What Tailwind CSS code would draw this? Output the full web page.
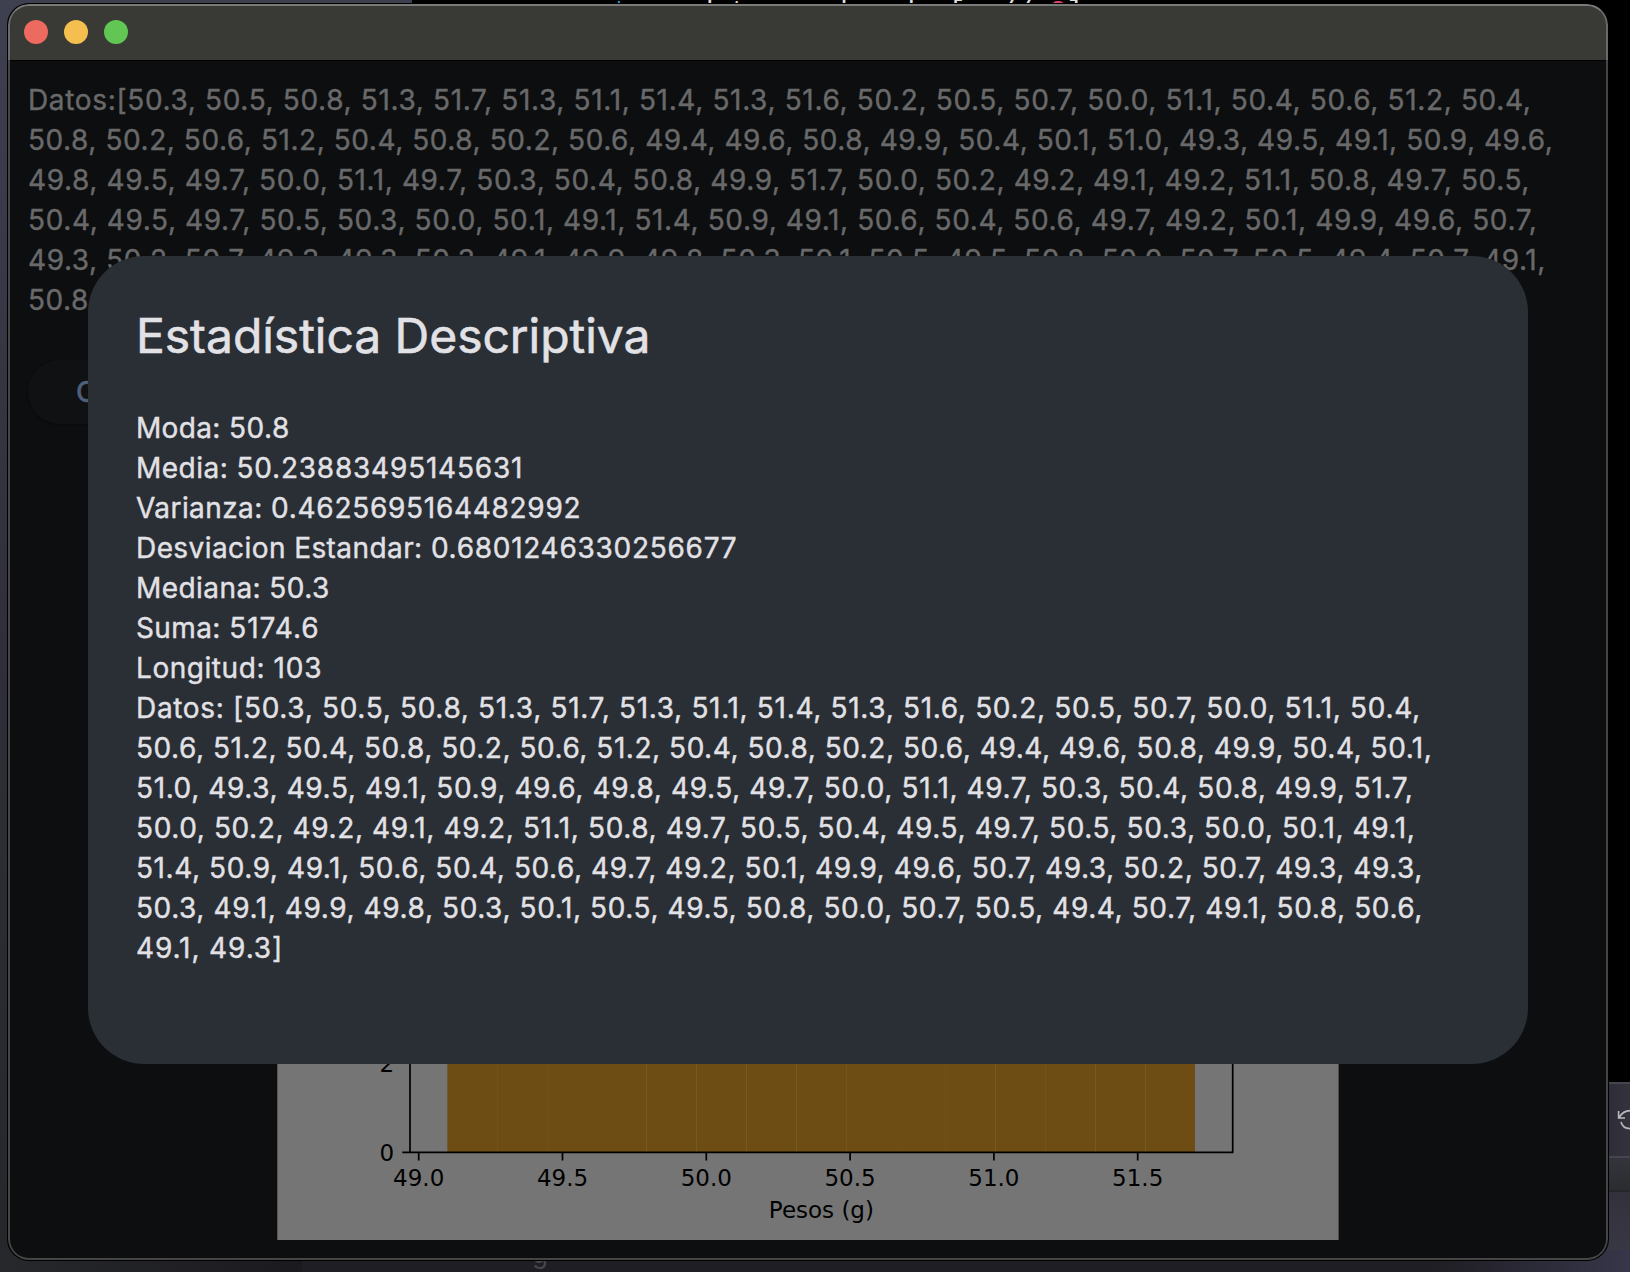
<!DOCTYPE html>
<html lang="es">
<head>
<meta charset="utf-8">
<title>Estadística Descriptiva</title>
<script src="https://cdn.jsdelivr.net/npm/@tailwindcss/browser@4"></script>
</head>
<body class="relative h-[1272px] w-[1630px] overflow-hidden bg-black font-['Inter','Liberation_Sans',sans-serif]">

  <!-- desktop behind the window -->
  <div class="absolute inset-0 flex flex-col">
    <div class="flex min-h-0 flex-1">
      <div class="h-full w-[412px] bg-linear-to-b from-[#3e4050] via-[#302f3a] to-[#26272b]"></div>
      <div class="relative flex flex-1 flex-col overflow-hidden">
        <pre class="absolute left-[167px] -top-[2px] font-['Liberation_Mono',monospace] text-[28px] leading-[28px] text-[#e0e0e0]"><span class="text-[#3b9ad6]">return</span> datos_ordenados[n // <span class="text-[#e0406f]">2</span>]</pre>
        <div class="h-[1082px]"></div>
        <div class="flex flex-1 justify-end">
          <div class="flex w-10 flex-col">
            <div class="flex h-[76px] items-center justify-end border-y-2 border-[#45454f] bg-linear-to-r from-[#292833] to-[#33323d]">
              <svg class="h-6 w-[13px]" viewBox="0 0 13 24" fill="none" stroke="#b9b9bd" stroke-width="1.6"><path d="M1.6 3v7H8M2 9.6C4.400 5.500 7.500 2.600 13 2.600M4 14c1 4 4 6.600 9 6.600"/></svg>
            </div>
            <div class="h-8 bg-linear-to-b from-[#34353c] to-[#2b2c30]"></div>
            <div class="h-0.5 bg-[#26262a]"></div>
            <div class="flex-1 bg-linear-to-b from-[#32313b] to-[#383744]"></div>
          </div>
        </div>
      </div>
    </div>
    <div class="flex h-[22px] overflow-hidden">
      <div class="w-[302px] bg-linear-to-r from-[#27282c] to-[#1b1b1f]"></div>
      <div class="flex flex-1 items-start bg-linear-to-r from-[#1e1e24] via-[#1f1e24] via-85% to-[#37364a] pl-[230px]">
        <span class="-mt-[10px] text-[26px] leading-[28px] text-[#46464a]">g</span>
      </div>
    </div>
  </div>

  <!-- application window -->
  <div class="relative ml-2 mt-1 flex h-[1256px] w-[1600px] flex-col overflow-hidden rounded-[21px] bg-[#0c0e10] shadow-[0_0_0_1px_#000]">
    <header class="flex h-14 shrink-0 items-center gap-4 rounded-t-[21px] border-2 border-b-0 border-[#696967] border-t-[#7a7b79] bg-[#393936] pb-0.5 pl-[14px]">
      <span class="size-6 rounded-full bg-[#ed6a5f]"></span>
      <span class="size-6 rounded-full bg-[#f5bf4f]"></span>
      <span class="size-6 rounded-full bg-[#62c655]"></span>
    </header>
    <main class="relative min-h-0 flex-1 rounded-b-[21px] border-2 border-t-0 border-[#444544] shadow-[inset_0_1px_0_#000]">
      <div class="whitespace-nowrap pl-[18px] pt-5 text-[28px] leading-10 text-[#69696a] [-webkit-text-stroke:0.4px]">
        <p class="tracking-[0.654px]">Datos:[50.3, 50.5, 50.8, 51.3, 51.7, 51.3, 51.1, 51.4, 51.3, 51.6, 50.2, 50.5, 50.7, 50.0, 51.1, 50.4, 50.6, 51.2, 50.4,</p>
        <p class="tracking-[0.561px]">50.8, 50.2, 50.6, 51.2, 50.4, 50.8, 50.2, 50.6, 49.4, 49.6, 50.8, 49.9, 50.4, 50.1, 51.0, 49.3, 49.5, 49.1, 50.9, 49.6,</p>
        <p class="tracking-[0.606px]">49.8, 49.5, 49.7, 50.0, 51.1, 49.7, 50.3, 50.4, 50.8, 49.9, 51.7, 50.0, 50.2, 49.2, 49.1, 49.2, 51.1, 50.8, 49.7, 50.5,</p>
        <p class="tracking-[0.612px]">50.4, 49.5, 49.7, 50.5, 50.3, 50.0, 50.1, 49.1, 51.4, 50.9, 49.1, 50.6, 50.4, 50.6, 49.7, 49.2, 50.1, 49.9, 49.6, 50.7,</p>
        <p class="tracking-[0.591px]">49.3, 50.2, 50.7, 49.3, 49.3, 50.3, 49.1, 49.9, 49.8, 50.3, 50.1, 50.5, 49.5, 50.8, 50.0, 50.7, 50.5, 49.4, 50.7, 49.1,</p>
        <p class="tracking-[0.5px]">50.8, 50.6, 49.1, 49.3]</p>
      </div>
      <button class="ml-[18px] mt-10 flex h-16 items-center rounded-full bg-[#101112] px-12 text-[28px] font-medium text-[#4d5f7c] shadow-[0_1px_2px_#090a0c] [-webkit-text-stroke:0.4px]">Calcular</button>

      <!-- histogram -->
      <svg class="absolute left-[267px] top-[900px] h-[280px] w-[1062px]" viewBox="277 960 1062 280" font-family="DejaVu Sans" font-size="23" fill="#000">
        <rect x="277.300" y="960" width="1061.300" height="280" fill="#757575"/>
        <rect x="447.300" y="960" width="747.700" height="192" fill="#6d4d14"/>
        <g fill="#755a28">
          <rect x="497" y="960" width="1" height="192" opacity=".5"/><rect x="547" y="960" width="1" height="192" opacity=".3"/>
          <rect x="646" y="960" width="1" height="192"/><rect x="696" y="960" width="1" height="192"/><rect x="746" y="960" width="1" height="192"/>
          <rect x="796" y="960" width="1" height="192"/><rect x="846" y="960" width="1" height="192" opacity=".6"/><rect x="896" y="960" width="1" height="192" opacity=".15"/>
          <rect x="945" y="960" width="1" height="192" opacity=".3"/><rect x="995" y="960" width="1" height="192"/><rect x="1045" y="960" width="1" height="192" opacity=".6"/>
          <rect x="1095" y="960" width="1" height="192"/><rect x="1145" y="960" width="1" height="192"/>
        </g>
        <g stroke="#000" stroke-width="1.700">
          <path d="M410 960V1153.200M1232.700 960V1153.200M402.300 1152.400H1233.500"/>
          <path d="M418.700 1152V1160.500M562.500 1152V1160.500M706.300 1152V1160.500M850.100 1152V1160.500M993.900 1152V1160.500M1137.700 1152V1160.500"/>
        </g>
        <g text-anchor="middle">
          <text x="418.700" y="1185.800">49.0</text><text x="562.500" y="1185.800">49.5</text><text x="706.300" y="1185.800">50.0</text>
          <text x="850.100" y="1185.800">50.5</text><text x="993.900" y="1185.800">51.0</text><text x="1137.700" y="1185.800">51.5</text>
          <text x="821.400" y="1217.600">Pesos (g)</text>
        </g>
        <g text-anchor="end"><text x="394.200" y="1161.200">0</text><text x="394.200" y="1071.500">2</text></g>
      </svg>

      <!-- dialog -->
      <section class="absolute left-[78px] top-[196px] h-[808px] w-[1440px] whitespace-nowrap rounded-[56px] bg-[#2a2e35] p-12 text-[28px] leading-10 text-[#e2e2e6] [-webkit-text-stroke:0.4px]">
        <h1 class="mb-10 text-[48px] leading-[64px] tracking-[-0.04px] [-webkit-text-stroke:0.6px]">Estadística Descriptiva</h1>
        <p class="tracking-[0.6px]"><span class="tracking-[0.33px]">Moda: </span>50.8</p>
        <p class="tracking-[0.78px]"><span class="tracking-[0.474px]">Media: </span>50.23883495145631</p>
        <p class="tracking-[0.71px]"><span class="tracking-[0.43px]">Varianza: </span>0.4625695164482992</p>
        <p class="tracking-[0.72px]"><span class="tracking-[0.42px]">Desviacion Estandar: </span>0.6801246330256677</p>
        <p class="tracking-[0.428px]">Mediana: 50.3</p>
        <p class="tracking-[1px]"><span class="tracking-[0.4px]">Suma: </span>5174.6</p>
        <p class="tracking-[0.9px]"><span class="tracking-[0.55px]">Longitud: </span>103</p>
        <p class="tracking-[0.682px]">Datos: [50.3, 50.5, 50.8, 51.3, 51.7, 51.3, 51.1, 51.4, 51.3, 51.6, 50.2, 50.5, 50.7, 50.0, 51.1, 50.4,</p>
        <p class="tracking-[0.535px]">50.6, 51.2, 50.4, 50.8, 50.2, 50.6, 51.2, 50.4, 50.8, 50.2, 50.6, 49.4, 49.6, 50.8, 49.9, 50.4, 50.1,</p>
        <p class="tracking-[0.61px]">51.0, 49.3, 49.5, 49.1, 50.9, 49.6, 49.8, 49.5, 49.7, 50.0, 51.1, 49.7, 50.3, 50.4, 50.8, 49.9, 51.7,</p>
        <p class="tracking-[0.61px]">50.0, 50.2, 49.2, 49.1, 49.2, 51.1, 50.8, 49.7, 50.5, 50.4, 49.5, 49.7, 50.5, 50.3, 50.0, 50.1, 49.1,</p>
        <p class="tracking-[0.58px]">51.4, 50.9, 49.1, 50.6, 50.4, 50.6, 49.7, 49.2, 50.1, 49.9, 49.6, 50.7, 49.3, 50.2, 50.7, 49.3, 49.3,</p>
        <p class="tracking-[0.6px]">50.3, 49.1, 49.9, 49.8, 50.3, 50.1, 50.5, 49.5, 50.8, 50.0, 50.7, 50.5, 49.4, 50.7, 49.1, 50.8, 50.6,</p>
        <p class="tracking-[0.9px]">49.1, 49.3]</p>
      </section>
    </main>
  </div>
</body>
</html>
